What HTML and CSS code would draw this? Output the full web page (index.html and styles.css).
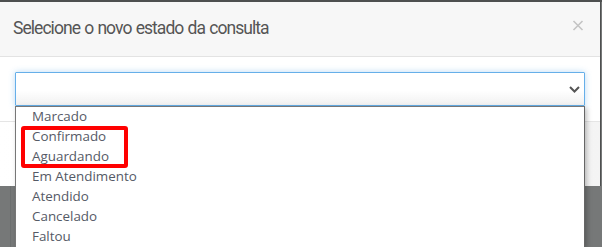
FILE: index.html
```html
<!DOCTYPE html>
<html lang="pt">
<head>
<meta charset="utf-8">
<title>Estado da consulta</title>
<link rel="stylesheet" href="styles.css">
</head>
<body>
<div class="screen">
  <div class="modal">
    <div class="modal-header">
      <h4 class="modal-title">Selecione o novo estado da consulta</h4>
      <span class="close" aria-label="Fechar">
        <svg width="12" height="11" viewBox="0 0 12 11"><path d="M1.5 1 L10.5 10 M10.5 1 L1.5 10" stroke="#c4c4c4" stroke-width="1.6" fill="none"/></svg>
      </span>
    </div>
    <div class="modal-body">
      <div class="select">
        <svg class="chevron" width="11" height="7" viewBox="0 0 11 7"><path d="M1 1 L5.5 5.5 L10 1" stroke="#555" stroke-width="2" fill="none"/></svg>
      </div>
    </div>
    <div class="modal-footer"></div>
  </div>
  <ul class="options">
    <li>Marcado</li>
    <li>Confirmado</li>
    <li>Aguardando</li>
    <li>Em Atendimento</li>
    <li>Atendido</li>
    <li>Cancelado</li>
    <li>Faltou</li>
  </ul>
  <div class="highlight"></div>
</div>
</body>
</html>
```

FILE: styles.css
```css
* { box-sizing: border-box; }
html, body {
  margin: 0;
  padding: 0;
  width: 602px;
  height: 247px;
  overflow: hidden;
}
body {
  background: #6c6f6f;
  font-family: "Open Sans", "Noto Sans", sans-serif;
}
.screen {
  position: relative;
  width: 602px;
  height: 247px;
  border-top: 2px solid #4e5050;
  background:
    linear-gradient(#6c6f6f, #6c6f6f) 10px 0 / 1px 100% no-repeat,
    #767878;
}
.modal {
  width: 600px;
  height: 184px;
  background: #fff;
  display: flex;
  flex-direction: column;
  box-shadow: 1px 0 0 #4e5050;
}
.modal-header {
  height: 55px;
  background: #f7f7f7;
  border-bottom: 1px solid #e3e3e3;
  display: flex;
  align-items: center;
  justify-content: space-between;
  padding: 0 16px 2px 13px;
}
.modal-title {
  margin: 0;
  font-family: "Roboto", "Noto Sans", sans-serif;
  font-weight: 400;
  font-size: 17.5px;
  color: #555;
  letter-spacing: -0.95px;
  word-spacing: 0.8px;
}
.close {
  display: flex;
  margin-top: -5px;
}
.modal-body {
  padding: 15px 15px 15px;
}
.select {
  height: 34px;
  border: 1px solid #66afe9;
  border-radius: 1px;
  background: linear-gradient(#fff 55%, #f1f1f1);
  box-shadow: 0 0 6px rgba(102, 175, 233, 0.45);
  display: flex;
  align-items: center;
  justify-content: flex-end;
  padding-right: 4px;
}
.chevron { margin-top: 1px; }
.modal-footer {
  flex: 1;
  border-top: 1px solid #e5e5e5;
  background: linear-gradient(90deg, #fff, #f4f4f4);
}
.options {
  position: absolute;
  left: 15px;
  top: 104px;
  width: 570px;
  height: 141px;
  margin: 0;
  padding: 0 0 0 16px;
  list-style: none;
  background: #fff;
  border: 1px solid #777;
  border-bottom: 0;
  border-right-color: #666;
  box-shadow: 2px 2px 5px rgba(0, 0, 0, 0.25);
}
.options li {
  height: 20px;
  line-height: 19px;
  font-size: 13.4px;
  color: #555a66;
}
.highlight {
  position: absolute;
  left: 21px;
  top: 124px;
  width: 107px;
  height: 42px;
  border: 4px solid #f00;
  border-radius: 3px;
}
```
